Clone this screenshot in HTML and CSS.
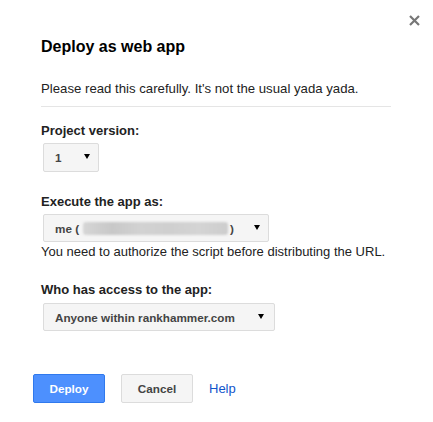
FILE: index.html
```html
<!DOCTYPE html>
<html>
<head>
<meta charset="utf-8">
<link rel="stylesheet" href="styles.css">
</head>
<body>
<div class="dialog">
  <button class="close" aria-label="Close">
    <svg width="11" height="11" viewBox="0 0 11 11"><path d="M1 1 L10 10 M10 1 L1 10" stroke="#777" stroke-width="2.2" fill="none"/></svg>
  </button>
  <h1 class="title">Deploy as web app</h1>
  <p class="intro">Please read this carefully. It's not the usual yada yada.</p>

  <div class="label first">Project version:</div>
  <div class="select sel-version"><span class="sel-text">1</span><span class="arrow"></span></div>

  <div class="label">Execute the app as:</div>
  <div class="select sel-exec"><span class="sel-text">me (<span class="blur"></span>)</span><span class="arrow"></span></div>
  <div class="note">You need to authorize the script before distributing the URL.</div>

  <div class="label">Who has access to the app:</div>
  <div class="select sel-access"><span class="sel-text">Anyone within rankhammer.com</span><span class="arrow"></span></div>

  <div class="buttons">
    <button class="btn btn-primary">Deploy</button>
    <button class="btn btn-default">Cancel</button>
    <a class="help" href="#">Help</a>
  </div>
</div>
</body>
</html>
```
FILE: styles.css
```css
html, body {
  margin: 0;
  padding: 0;
  background: #fff;
}
body {
  font-family: "Liberation Sans", Arial, sans-serif;
  color: #222;
}
.dialog {
  position: relative;
  padding: 37px 42px 0 41px;
  width: 350px;
}
.close {
  position: absolute;
  top: 15px;
  left: 409px;
  width: 11px;
  height: 11px;
  padding: 0;
  border: 0;
  background: none;
  display: block;
}
.close svg { display: block; }
.title {
  margin: 0;
  font-size: 16px;
  line-height: 20px;
  font-weight: bold;
  color: #000;
}
.intro {
  margin: 24px 0 0 0;
  font-size: 13.2px;
  line-height: 16px;
  padding-bottom: 9px;
  border-bottom: 1px solid #e5e5e5;
}
.label {
  font-size: 13px;
  line-height: 16px;
  font-weight: bold;
  margin-top: 22px;
}
.label.first { margin-top: 16px; }
.select {
  box-sizing: border-box;
  margin: 4px 0 0 2px;
  height: 29px;
  background: #f5f5f5;
  border: 1px solid #dcdcdc;
  border-radius: 2px;
  display: flex;
  align-items: center;
  justify-content: space-between;
  padding: 0 8px 0 11px;
  font-size: 11.7px;
  font-weight: bold;
  color: #444;
}
.sel-version { width: 56px; }
.sel-exec { width: 226px; height: 28px; }
.sel-access { width: 232px; height: 28px; margin-top: 5px; padding-right: 10px; }
.sel-text { display: flex; align-items: center; white-space: nowrap; }
.arrow {
  width: 0;
  height: 0;
  border-left: 3px solid transparent;
  border-right: 3px solid transparent;
  border-top: 5px solid #000;
  margin-top: -2px;
}
.blur {
  display: inline-block;
  width: 145px;
  height: 13px;
  margin: 0 2px 0 4px;
  border-radius: 3px;
  background: linear-gradient(90deg, #d6d6d6, #c8c8c8 20%, #d2d2d2 40%, #cfcfcf 60%, #d4d4d4 80%, #cdcdcd);
  filter: blur(1px);
}
.note {
  font-size: 13px;
  line-height: 16px;
  margin-top: 2px;
}
.buttons {
  display: flex;
  align-items: center;
  margin: 43px 0 0 -8px;
  gap: 16px;
}
.btn {
  box-sizing: border-box;
  width: 72px;
  height: 29px;
  border-radius: 2px;
  font-family: "Liberation Sans", Arial, sans-serif;
  font-size: 11.7px;
  font-weight: bold;
  padding: 0;
}
.btn-primary {
  background: #4d90fe;
  border: 1px solid #3079ed;
  color: #fff;
}
.btn-default {
  background: #f5f5f5;
  border: 1px solid #dcdcdc;
  color: #444;
}
.help {
  font-size: 13px;
  color: #15c;
  text-decoration: none;
}
```
